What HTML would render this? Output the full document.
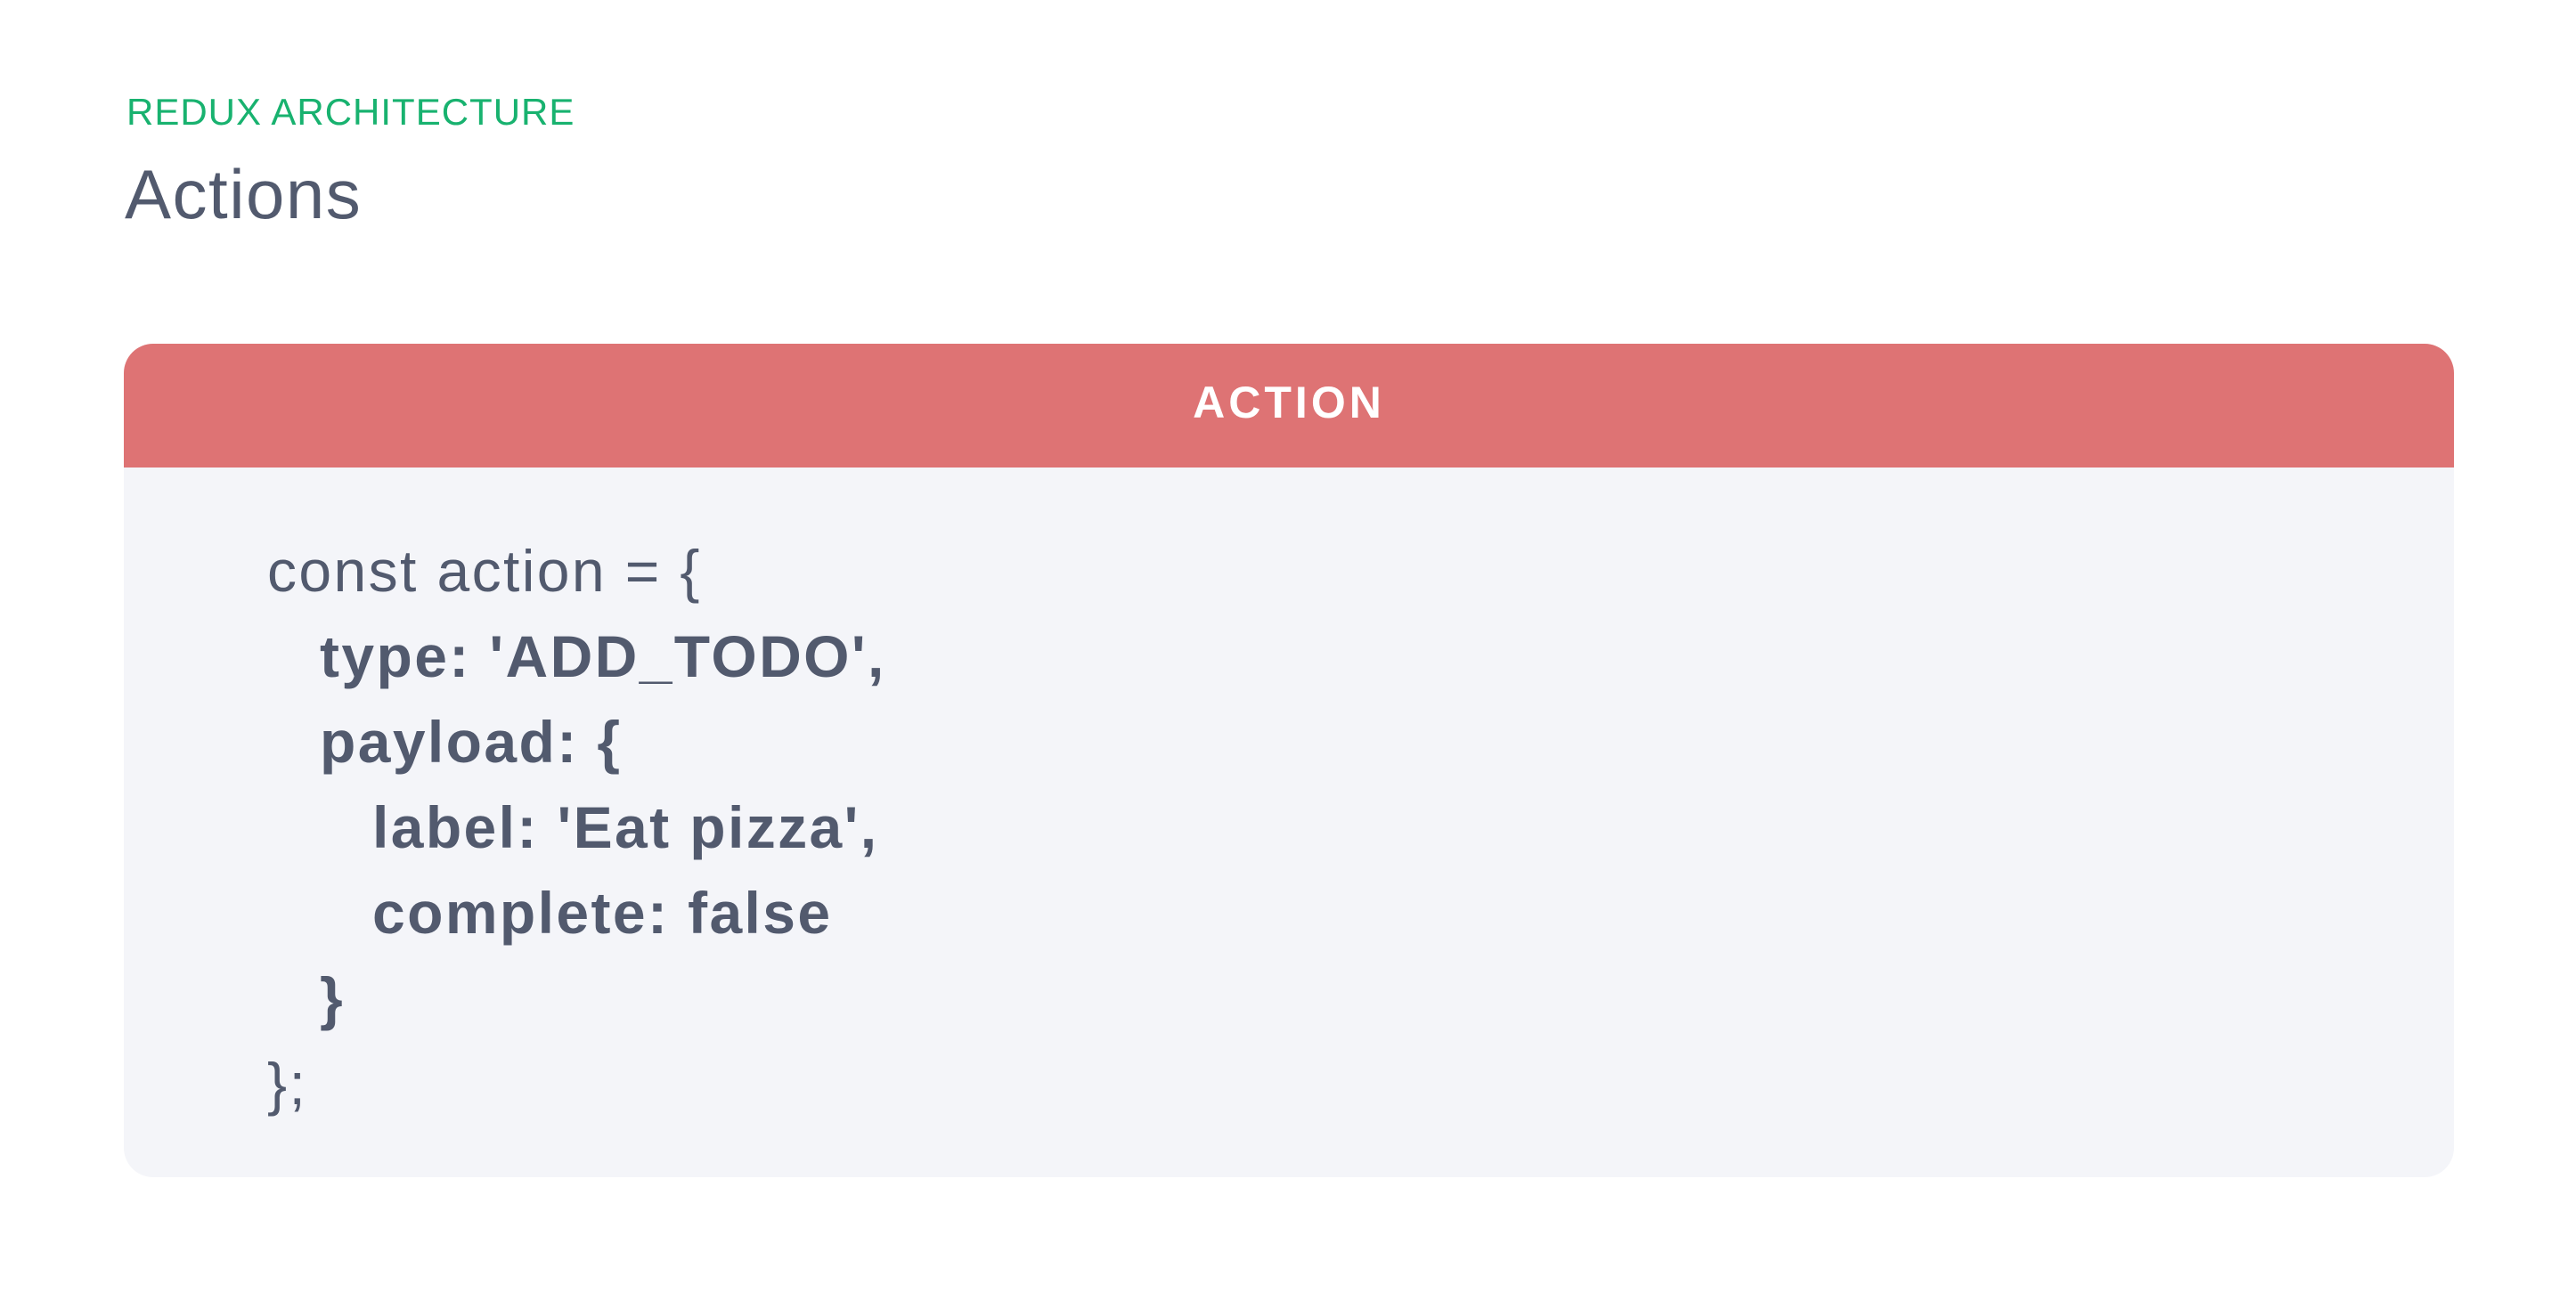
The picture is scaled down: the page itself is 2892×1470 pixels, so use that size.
<!DOCTYPE html>
<html><head><style>
body{margin:0;width:2892px;height:1470px;background:#fff;font-family:"Liberation Sans",sans-serif;position:relative;overflow:hidden}
.k{position:absolute;left:142px;top:102px;font-size:42px;color:#18b26f;letter-spacing:1px;line-height:48px}
.t{position:absolute;left:140px;top:173px;font-size:78px;color:#525a6e;line-height:90px;letter-spacing:1.5px}
.box{position:absolute;left:139px;top:386px;width:2616px;height:936px;background:#f4f5f9;border-radius:33px;overflow:hidden}
.h{height:139px;background:#de7374;color:#fff;font-weight:bold;font-size:50px;text-align:center;line-height:133px;letter-spacing:4px}
.c{position:absolute;left:161px;top:207px;font-size:66px;color:#525a6e;line-height:96px;white-space:nowrap;letter-spacing:2.4px}
.c div{height:96px}
.b{font-weight:bold;letter-spacing:2.4px}
.i1{padding-left:59px}.i2{padding-left:118px}
</style></head><body>
<div class="k">REDUX ARCHITECTURE</div>
<div class="t">Actions</div>
<div class="box"><div class="h">ACTION</div>
<div class="c">
<div>const action = {</div>
<div class="b i1">type: 'ADD_TODO',</div>
<div class="b i1">payload: {</div>
<div class="b i2">label: 'Eat pizza',</div>
<div class="b i2">complete: false</div>
<div class="b i1">}</div>
<div>};</div>
</div></div>
</body></html>
